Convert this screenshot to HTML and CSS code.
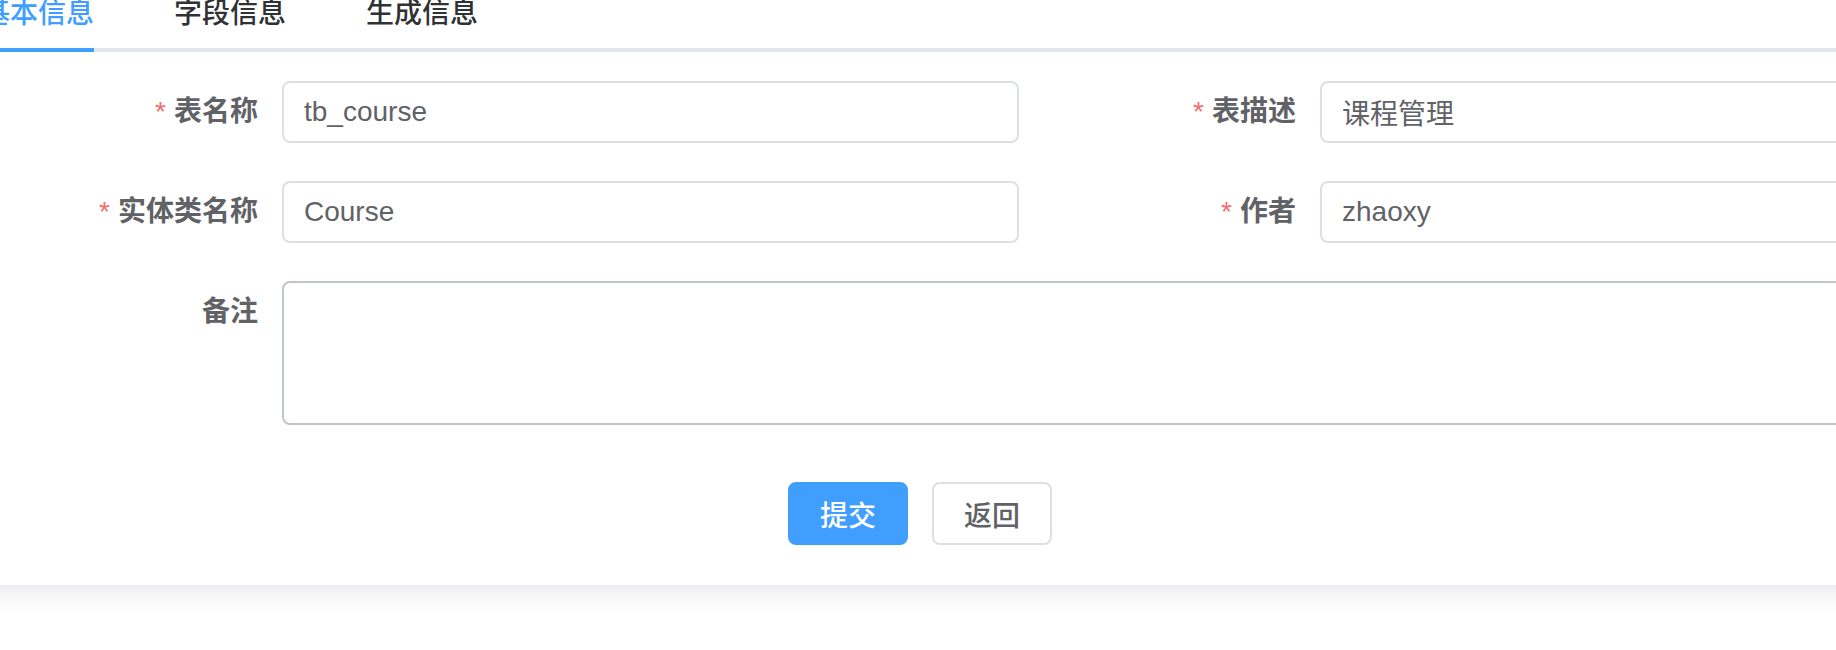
FILE: index.html
```html
<!DOCTYPE html>
<html lang="zh-CN">
<head>
<meta charset="utf-8">
<title>基本信息</title>
<link rel="stylesheet" href="styles.css">
</head>
<body>
<div class="card">
  <div class="tabs">
    <div class="tab active"><span class="tab-text">基本信息</span></div>
    <div class="tab"><span class="tab-text">字段信息</span></div>
    <div class="tab"><span class="tab-text">生成信息</span></div>
  </div>
  <div class="form">
    <label class="label required">表名称</label>
    <input class="input" type="text" value="tb_course" readonly>
    <label class="label required">表描述</label>
    <input class="input" type="text" value="课程管理" readonly>

    <label class="label required">实体类名称</label>
    <input class="input" type="text" value="Course" readonly>
    <label class="label required">作者</label>
    <input class="input" type="text" value="zhaoxy" readonly>

    <label class="label label-top">备注</label>
    <textarea class="textarea" readonly></textarea>
  </div>
  <div class="actions">
    <button class="btn btn-primary" type="button">提交</button>
    <button class="btn btn-default" type="button">返回</button>
  </div>
</div>
</body>
</html>
```
FILE: styles.css
```css
html, body {
  margin: 0;
  padding: 0;
  overflow: hidden;
  background: #ffffff;
}

body {
  width: 1836px;
  height: 650px;
  font-family: "Liberation Sans", "Noto Sans CJK SC", sans-serif;
  color: #606266;
}

.card {
  box-sizing: border-box;
  width: 1960px;
  margin: -30px 0 0 -60px;
  padding: 0 40px 40px;
  background: #ffffff;
  border: 2px solid #ebeef5;
  box-shadow: 0 4px 24px rgba(0, 0, 0, 0.1);
}

.tabs {
  display: flex;
  box-sizing: border-box;
  height: 80px;
  border-bottom: 4px solid #e4e7ed;
}

.tab {
  height: 80px;
  margin-bottom: -4px;
  padding: 0 40px;
  font-size: 28px;
  font-weight: 500;
  color: #303133;
}

.tab:first-child {
  padding-left: 0;
}

.tab-text {
  display: block;
  box-sizing: border-box;
  height: 80px;
  padding-top: 4px;
  line-height: 76px;
}

.tab.active {
  color: #409eff;
}

.tab.active .tab-text {
  box-shadow: inset 0 -4px 0 #409eff;
}

.form {
  display: grid;
  grid-template-columns: 300px 737px 301px 800px;
  grid-template-rows: 62px 62px 144px;
  row-gap: 38px;
  margin-top: 29px;
}

.label {
  box-sizing: border-box;
  padding-right: 24px;
  text-align: right;
  font-size: 28px;
  font-weight: 700;
  line-height: 62px;
  color: #606266;
  white-space: nowrap;
}

.label-top {
  align-self: start;
}

.required::before {
  content: "*";
  color: #f56c6c;
  margin-right: 8px;
  font-weight: 400;
}

.input {
  box-sizing: border-box;
  width: 100%;
  height: 62px;
  margin: 0;
  padding: 0 20px;
  border: 2px solid #dcdfe6;
  border-radius: 8px;
  background: #ffffff;
  font-family: "Liberation Sans", "Noto Sans CJK SC", sans-serif;
  font-size: 28px;
  color: #606266;
  outline: none;
}

.textarea {
  grid-column: 2 / 5;
  box-sizing: border-box;
  width: 100%;
  height: 144px;
  margin: 0;
  padding: 10px 20px;
  border: 2px solid #c0c4cc;
  border-radius: 8px;
  background: #ffffff;
  font-family: "Liberation Sans", "Noto Sans CJK SC", sans-serif;
  font-size: 28px;
  color: #606266;
  resize: none;
  outline: none;
}

.actions {
  display: flex;
  justify-content: center;
  gap: 24px;
  width: 1876px;
  margin-top: 57px;
}

.btn {
  box-sizing: border-box;
  width: 120px;
  height: 63px;
  margin: 0;
  padding: 0;
  border-radius: 8px;
  font-family: "Liberation Sans", "Noto Sans CJK SC", sans-serif;
  font-size: 28px;
  font-weight: 500;
  cursor: pointer;
}

.btn-primary {
  background: #409eff;
  border: 2px solid #409eff;
  color: #ffffff;
}

.btn-default {
  background: #ffffff;
  border: 2px solid #dcdfe6;
  color: #606266;
}
```
